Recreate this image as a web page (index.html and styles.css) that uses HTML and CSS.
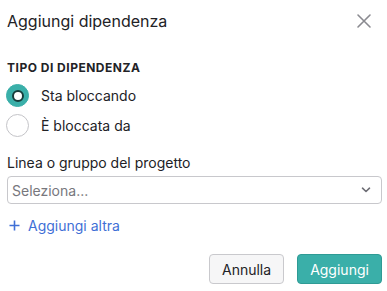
FILE: index.html
```html
<!DOCTYPE html>
<html lang="it">
<head>
<meta charset="utf-8">
<link rel="stylesheet" href="styles.css">
</head>
<body>
<div class="dialog">
  <div class="header">
    <h1 class="title">Aggiungi dipendenza</h1>
    <button class="close" aria-label="Chiudi">
      <svg width="16" height="16" viewBox="0 0 16 16"><path d="M2 2L14 14M14 2L2 14" stroke="#8a8a90" stroke-width="1.6" stroke-linecap="round"/></svg>
    </button>
  </div>
  <div class="section-title">TIPO DI DIPENDENZA</div>
  <div class="radios">
    <label class="radio"><span class="dot checked"><span class="inner"></span></span><span>Sta bloccando</span></label>
    <label class="radio"><span class="dot"></span><span>È bloccata da</span></label>
  </div>
  <div class="field-label">Linea o gruppo del progetto</div>
  <div class="select">
    <span class="placeholder">Seleziona...</span>
    <svg width="10" height="6" viewBox="0 0 10 6"><path d="M1.5 1.2L5 4.5L8.5 1.2" fill="none" stroke="#6e6e75" stroke-width="1.6" stroke-linecap="round" stroke-linejoin="round"/></svg>
  </div>
  <div class="add-link">
    <svg width="11" height="11" viewBox="0 0 11 11"><path d="M5.5 0.5V10.5M0.5 5.5H10.5" stroke="#3f6fd6" stroke-width="1.6"/></svg>
    <span>Aggiungi altra</span>
  </div>
  <div class="footer">
    <button class="btn secondary">Annulla</button>
    <button class="btn primary">Aggiungi</button>
  </div>
</div>
</body>
</html>
```
FILE: styles.css
```css
* { box-sizing: border-box; }
html, body { margin: 0; padding: 0; background: #fff; }
body { font-family: Inter, "Noto Sans", sans-serif; color: #222226; }
.dialog { width: 387px; height: 291px; padding: 0 5px 0 7px; display: flex; flex-direction: column; }
.header { display: flex; align-items: center; justify-content: space-between; height: 40px; padding-top: 1px; }
.title { margin: 0; font-size: 16px; font-weight: 400; color: #222226; }
.close { border: 0; background: none; padding: 0; width: 16px; height: 16px; margin-right: 10px; display: flex; }
.section-title { margin-top: 21px; font-size: 12px; font-weight: 700; letter-spacing: 0.5px; color: #222226; line-height: 14px; }
.radios { display: flex; flex-direction: column; gap: 7px; margin-top: 9px; }
.radio { display: flex; align-items: center; gap: 12px; font-size: 14px; height: 23px; margin-left: -1px; }
.dot { width: 23px; height: 23px; border-radius: 50%; border: 1px solid #c4c4c8; background: #fff; display: flex; align-items: center; justify-content: center; flex: none; }
.dot.checked { background: #3aafa9; border-color: #3aafa9; }
.inner { width: 12px; height: 12px; border-radius: 50%; background: #fff; border: 2px solid #173d3b; }
.field-label { margin-top: 18px; font-size: 14px; line-height: 16px; }
.select { margin-top: 5px; height: 28px; border: 1px solid #c8c8cc; border-radius: 4px; display: flex; align-items: center; justify-content: space-between; padding: 0 10px 0 4px; }
.placeholder { font-size: 14px; color: #77777d; }
.add-link { margin-top: 13px; display: flex; align-items: center; gap: 8px; color: #3f6fd6; font-size: 14px; padding-left: 2px; }
.footer { margin-top: auto; margin-bottom: 7px; display: flex; justify-content: flex-end; gap: 13px; }
.btn { font-family: Inter, "Noto Sans", sans-serif; font-size: 14px; height: 30px; border-radius: 4px; padding: 0 12px; cursor: pointer; }
.btn.secondary { background: #f6f6f7; border: 1px solid #c9c9cd; color: #222226; width: 75px; }
.btn.primary { background: #3aafa9; border: 1px solid #2f9b95; color: #fff; width: 85px; }
```
